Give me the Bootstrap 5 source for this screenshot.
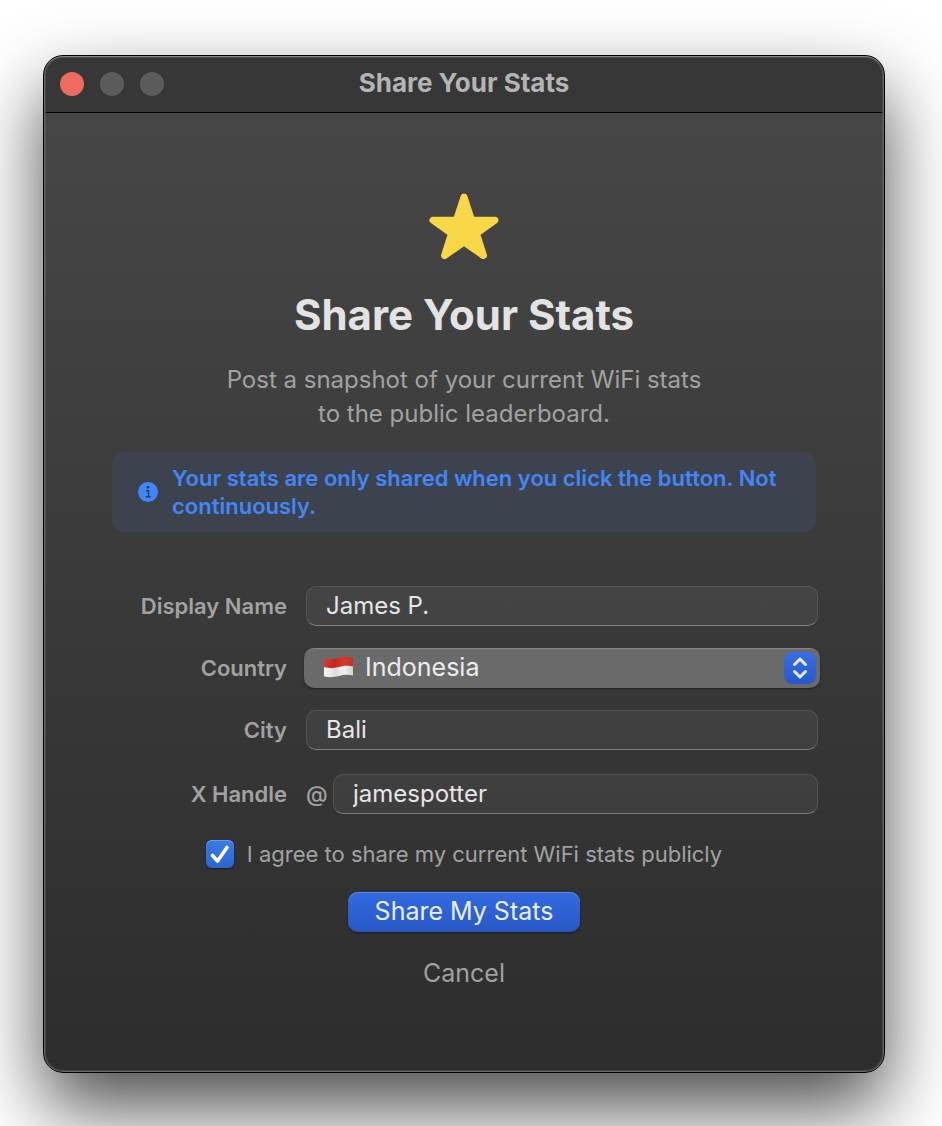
<!DOCTYPE html>
<html lang="en">
<head>
<meta charset="utf-8">
<meta name="viewport" content="width=device-width, initial-scale=1">
<title>Share Your Stats</title>
<link href="https://cdn.jsdelivr.net/npm/bootstrap@5.3.0/dist/css/bootstrap.min.css" rel="stylesheet">
<style>
  body { font-family: Inter, "Liberation Sans", sans-serif; background: #fff; }
  .stage { padding: 55px 57px 53px 43px; overflow: hidden; }
  .win {
    border: 1px solid #000; border-radius: 20px; overflow: hidden;
    background: linear-gradient(#484848, #2d2d2d); color: #a2a2a2;
    box-shadow: 0 35px 74px rgba(0, 0, 0, .7); position: relative;
  }
  /* light rim inside the dark outline */
  .win::after {
    content: ""; position: absolute; inset: 0; pointer-events: none;
    border: 1px solid #656565; border-top-color: #858585; border-radius: 19px;
    box-shadow: inset 0 0 0 1px rgba(100, 100, 100, .45);
  }
  .titlebar { display: grid; grid-template-columns: 1fr auto 1fr; height: 57px; padding: 0 16px; background: #373737; border-bottom: 1px solid #000; }
  .titlebar h1 { font-size: 26px; line-height: 30px; padding-bottom: 2px; color: #b4b4b4; }
  .dot { width: 24px; height: 24px; border: 0; padding: 0; border-radius: 50%; background: #5b5b5b; }
  .dot-close { background: #ee6b60; }
  .sheet { padding: 76px 64px 82px; }
  .headline { font-size: 42px; line-height: 52px; margin: 24px 0 22px; color: #e3e3e3; }
  .intro { font-size: 24px; line-height: 34px; margin-bottom: 21px; }
  .notice { background: #3c434f; color: #4386f5; border-radius: 12px; font-size: 22px; line-height: 28px; padding: 12px 24px 12px 26px; margin: 0 4px 54px; gap: 14px; }
  .fields { display: grid; grid-template-columns: 179px minmax(0, 1fr); grid-template-rows: repeat(3, 40px) 44px; column-gap: 17px; row-gap: 22px; align-items: center; margin-bottom: 24px; }
  .fields > label { font-size: 22px; line-height: 28px; text-align: right; }
  .cell { padding: 0 2px; }
  .at-sign { flex: 0 0 27px; font-size: 22px; line-height: 40px; }
  .field {
    height: 40px; width: 100%; min-width: 0; padding: 0 19px 2px; font-size: 24px; line-height: 36px; color: #e6e6e6;
    background: rgba(255, 255, 255, .05); border: 1px solid rgba(255, 255, 255, .1); border-bottom-color: rgba(255, 255, 255, .32);
    border-radius: 10px;
  }
  .pick { height: 40px; width: 100%; appearance: none; border: 0; border-top: 1px solid #868686; border-radius: 10px; background: #6a6a6a; color: #ececec; font-size: 25px; line-height: 36px; padding: 0 44px 3px 61px; box-shadow: 0 1px 2px rgba(0, 0, 0, .5); }
  .flag { position: absolute; left: 19px; top: 8px; pointer-events: none; }
  .stepper { position: absolute; right: 4px; top: 4px; pointer-events: none; }
  .tick { appearance: none; width: 28px; height: 28px; margin: 0; border-radius: 6px; background: linear-gradient(#3b7be6, #2c66cf); box-shadow: inset 0 1px 0 #679bef, 0 1px 2px rgba(0, 0, 0, .5); }
  .tick-mark { position: absolute; left: 0; top: 0; pointer-events: none; }
  .agree { font-size: 22px; line-height: 28px; gap: 13px; }
  .share { width: 232px; height: 40px; border: 0; border-radius: 10px; padding: 0 0 3px; color: #e8f0ff; font-size: 25px; line-height: 36px; background: linear-gradient(#3369e2, #2858c5); box-shadow: inset 0 1px 0 #5c8bef, 0 1px 2px rgba(0, 0, 0, .5); }
  .cancel { border: 0; background: none; color: #a0a0a0; font-size: 25px; line-height: 34px; padding: 0; }
</style>
</head>
<body>
<div class="stage">
  <main class="win">
    <header class="titlebar align-items-center">
      <div class="d-flex gap-3">
        <button type="button" class="dot dot-close" aria-label="Close"></button>
        <button type="button" class="dot" aria-label="Minimize" disabled></button>
        <button type="button" class="dot" aria-label="Zoom" disabled></button>
      </div>
      <h1 class="m-0 fw-bold">Share Your Stats</h1>
    </header>

    <form class="sheet d-flex flex-column">
      <div class="text-center">
        <svg class="d-block mx-auto" width="76" height="76" viewBox="0 0 76 76" aria-hidden="true">
          <path d="M38 8 L45.500 31 L69 31.200 L50.500 44.500 L57.500 66.500 L38 53 L18.500 66.500 L25.500 44.500 L7 31.200 L30.500 31 Z" fill="#f9d848" stroke="#f9d848" stroke-width="7" stroke-linejoin="round"/>
        </svg>
        <h2 class="headline fw-bold">Share Your Stats</h2>
        <p class="intro">Post a snapshot of your current WiFi stats<br>to the public leaderboard.</p>
      </div>

      <div class="notice d-flex align-items-center fw-semibold" role="note">
        <svg class="flex-shrink-0" width="20" height="20" viewBox="0 0 20 20" aria-hidden="true">
          <circle cx="10" cy="10" r="10" fill="#3f87fb"/>
          <circle cx="10" cy="5.300" r="1.300" fill="#303947"/>
          <path d="M8 8.700H10.500V14.600M7.700 14.700H12.600" fill="none" stroke="#303947" stroke-width="1.400"/>
        </svg>
        <span>Your stats are only shared when you click the button. Not continuously.</span>
      </div>

      <div class="fields">
        <label class="fw-semibold" for="name">Display Name</label>
        <div class="cell d-flex"><input class="field" id="name" type="text" value="James P."></div>

        <label class="fw-semibold" for="country">Country</label>
        <div class="position-relative">
          <select class="pick d-block" id="country"><option>Indonesia</option></select>
          <svg class="flag" width="31" height="22" viewBox="0 0 31 22" aria-hidden="true">
            <defs>
              <linearGradient id="red" x2="1"><stop stop-color="#d93a2c"/><stop offset=".35" stop-color="#c3271d"/><stop offset=".7" stop-color="#d63c2e"/><stop offset="1" stop-color="#bf3228"/></linearGradient>
              <linearGradient id="white" x2="1"><stop stop-color="#f4f4f4"/><stop offset=".4" stop-color="#dedede"/><stop offset=".7" stop-color="#f1f1f1"/><stop offset="1" stop-color="#d2d2d2"/></linearGradient>
            </defs>
            <path d="M1 2 C8 4 12 3 16 1.800 C21 .5 25 .3 30 1.500 V10.500 C25 9.300 21 9.700 16 11 C11 12.300 7 12.700 1 11 Z" fill="url(#red)"/>
            <path d="M1 11 C7 12.700 11 12.300 16 11 C21 9.700 25 9.300 30 10.500 V19.500 C25 18.300 21 18.500 16 20 C11 21.400 6 21.600 1 20.300 Z" fill="url(#white)"/>
          </svg>
          <svg class="stepper" width="32" height="32" viewBox="0 0 32 32" aria-hidden="true">
            <defs><linearGradient id="blue" x2="0" y2="1"><stop stop-color="#386ee5"/><stop offset="1" stop-color="#2759c8"/></linearGradient></defs>
            <rect width="32" height="32" rx="8" fill="url(#blue)"/>
            <path d="M10.500 12.500 L16 7 L21.500 12.500 M10.500 19.500 L16 25 L21.500 19.500" fill="none" stroke="#e3edff" stroke-width="3" stroke-linecap="round" stroke-linejoin="round"/>
          </svg>
        </div>

        <label class="fw-semibold" for="city">City</label>
        <div class="cell d-flex"><input class="field" id="city" type="text" value="Bali"></div>

        <label class="fw-semibold" for="handle">X Handle</label>
        <div class="cell d-flex"><span class="at-sign fw-medium">@</span><input class="field" id="handle" type="text" value="jamespotter"></div>
      </div>

      <div class="agree d-flex justify-content-center align-items-center">
        <span class="position-relative d-flex">
          <input class="tick" id="agree" type="checkbox" checked>
          <svg class="tick-mark" width="28" height="28" viewBox="0 0 28 28" aria-hidden="true"><path d="M6.500 15.500 L11.500 21 L21 7.500" fill="none" stroke="#fff" stroke-width="3.600" stroke-linecap="round" stroke-linejoin="round"/></svg>
        </span>
        <label for="agree">I agree to share my current WiFi stats publicly</label>
      </div>
      <button class="share align-self-center mt-4" type="submit">Share My Stats</button>
      <button class="cancel align-self-center mt-4" type="button">Cancel</button>
    </form>
  </main>
</div>
<script src="https://cdn.jsdelivr.net/npm/bootstrap@5.3.0/dist/js/bootstrap.bundle.min.js"></script>
</body>
</html>
